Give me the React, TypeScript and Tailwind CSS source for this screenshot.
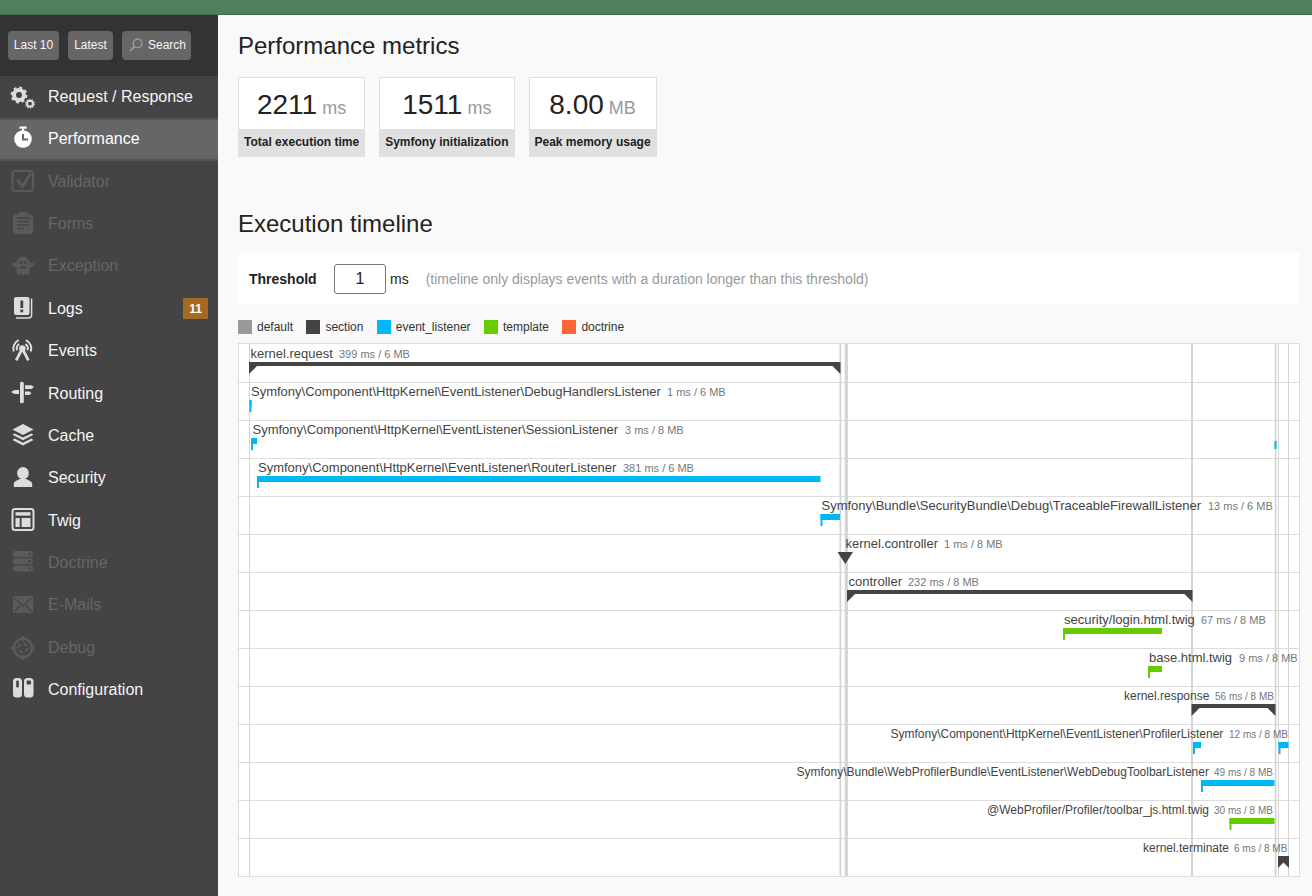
import React from "react";

const BG = "#444";

const icons: Record<string, (c: string) => React.ReactNode> = {
  request: (c) => (
    <>
      <circle cx="8" cy="10" r="5" fill="none" stroke={c} strokeWidth="4" />
      <circle cx="8" cy="10" r="7.4" fill="none" stroke={c} strokeWidth="2" strokeDasharray="3 2.81" />
      <circle cx="19" cy="18.7" r="2.9" fill="none" stroke={c} strokeWidth="2" />
      <circle cx="19" cy="18.7" r="4.3" fill="none" stroke={c} strokeWidth="1.2" strokeDasharray="1.4 1.3" />
    </>
  ),
  performance: (c) => (
    <>
      <rect x="8.4" y="-0.6" width="7.4" height="2.3" rx="1" fill={c} />
      <rect x="11" y="1.5" width="2" height="3" fill={c} />
      <circle cx="12" cy="12" r="8.8" fill={c} />
      <path d="M12 7v5.5h5" fill="none" stroke="#666" strokeWidth="2" />
    </>
  ),
  validator: (c) => (
    <>
      <rect x="1.5" y="1" width="20.5" height="20" rx="2.5" fill="none" stroke={c} strokeWidth="2.2" />
      <path d="M6.5 9.5l5 7L20 3" fill="none" stroke={c} strokeWidth="2.8" />
    </>
  ),
  forms: (c) => (
    <>
      <rect x="2" y="2.6" width="20" height="19.4" rx="2" fill={c} />
      <rect x="7" y="0" width="10" height="5" rx="1.5" fill={c} />
      <path d="M5.5 6h13v2M6 9.5h12M6 13h12M6 16.5h7" fill="none" stroke={BG} strokeWidth="1.4" />
    </>
  ),
  exception: (c) => (
    <>
      <path d="M5.5 8a6.5 6.5 0 0 1 13 0v10.5l-2.2 1.7-2-1.7-2.3 1.7-2.3-1.7-2 1.7-2.2-1.7z" fill={c} />
      <path d="M5.5 7.2C3.5 8.5 2 8.4.5 7.2L1 10l4.5 3zM18.5 7.2c2 1.3 3.5 1.2 5 0L23 10l-4.5 3z" fill={c} />
      <circle cx="9.6" cy="7.6" r="1.5" fill={BG} />
      <circle cx="14.4" cy="7.6" r="1.5" fill={BG} />
      <path d="M8.5 11.5h7v2h-7z" fill={BG} />
    </>
  ),
  logs: (c) => (
    <>
      <rect x="3" y="0" width="15.5" height="18" rx="2" fill={c} />
      <path d="M20.6 1.5V18a3 3 0 0 1-3 3H5" fill="none" stroke={c} strokeWidth="1.5" />
      <rect x="9.4" y="3.5" width="2.8" height="7.5" fill={BG} />
      <rect x="9.4" y="12.5" width="2.8" height="2.8" fill={BG} />
    </>
  ),
  events: (c) => (
    <>
      <circle cx="11.3" cy="9.5" r="3.2" fill={c} />
      <path d="M10.3 11.5L5.2 21.3M12.3 11.5l5.1 9.8" fill="none" stroke={c} strokeWidth="2.8" />
      <path d="M6.1 11.3A5.5 5.5 0 0 1 8.2 5M16.5 11.3A5.5 5.5 0 0 0 14.4 5M2.8 12.5A9 9 0 0 1 7.8 1.2M19.8 12.5A9 9 0 0 0 14.8 1.2" fill="none" stroke={c} strokeWidth="2" />
    </>
  ),
  routing: (c) => (
    <>
      <rect x="9" y="-0.3" width="3.8" height="21.6" rx="1.6" fill={c} />
      <path d="M8 8H3.5L0 10l3.5 2H8z" fill={c} />
      <path d="M14 3.2h6.5L23 5l-2.5 2H14zM14 9.5h4.5l2 1.7-2 1.8H14z" fill={c} />
    </>
  ),
  cache: (c) => (
    <>
      <path d="M12 0l10.5 5.5L12 11 1.5 5.5z" fill={c} />
      <path d="M3.6 9.4L1.5 10.7 12 16.2l10.5-5.5-2.1-1.3L12 13.6z" fill={c} />
      <path d="M3.6 14.6l-2.1 1.3L12 21.5l10.5-5.6-2.1-1.3-8.4 4.2z" fill={c} />
    </>
  ),
  security: (c) => (
    <>
      <ellipse cx="12" cy="6.2" rx="5.8" ry="6.2" fill={c} />
      <path d="M2.8 20v-3c0-2.5 3.5-3.6 6-5h6.4c2.5 1.4 6 2.5 6 5v3z" fill={c} />
    </>
  ),
  twig: (c) => (
    <>
      <rect x="1.5" y="0" width="21" height="21" rx="2.5" fill="none" stroke={c} strokeWidth="2" />
      <rect x="4.5" y="3.2" width="15" height="3.4" fill={c} />
      <rect x="4.5" y="9" width="4.2" height="9" fill={c} />
      <rect x="10.6" y="9" width="8.9" height="9" fill={c} />
    </>
  ),
  doctrine: (c) => (
    <>
      <rect x="2" y="0" width="20" height="6" rx="2.2" fill={c} />
      <rect x="2" y="7.2" width="20" height="6" rx="2.2" fill={c} />
      <rect x="2" y="14.4" width="20" height="6" rx="2.2" fill={c} />
      <circle cx="18.5" cy="3" r="1.2" fill={BG} />
      <circle cx="18.5" cy="10.2" r="1.2" fill={BG} />
      <circle cx="18.5" cy="17.4" r="1.2" fill={BG} />
    </>
  ),
  email: (c) => (
    <>
      <rect x="2" y="2" width="20" height="17" rx="1.5" fill={c} />
      <path d="M3.5 4l8.5 8 8.5-8M3.5 17.5l5.5-6M20.5 17.5l-5.5-6" fill="none" stroke={BG} strokeWidth="1.3" />
    </>
  ),
  debug: (c) => (
    <>
      <circle cx="12" cy="12" r="9.2" fill="none" stroke={c} strokeWidth="2.6" />
      <path d="M12 0v5.5M12 18.5V24M0 12h5.5M18.5 12H24" stroke={c} strokeWidth="2.6" fill="none" />
      <circle cx="12" cy="12" r="4.4" fill="none" stroke={c} strokeWidth="2.2" strokeDasharray="4.5 2.4" />
    </>
  ),
  config: (c) => (
    <>
      <rect x="2" y="0" width="9" height="19.5" rx="3.5" fill={c} />
      <rect x="13" y="0" width="9.5" height="19.5" rx="3.5" fill={c} />
      <rect x="5.2" y="2.6" width="2.6" height="7" rx="1" fill={BG} />
      <rect x="15.6" y="2.6" width="4.4" height="4" rx="1" fill={BG} />
    </>
  ),
};

type Item = { label: string; icon: string; disabled?: boolean; selected?: boolean; badge?: string };
const menu: Item[] = [
  { label: "Request / Response", icon: "request" },
  { label: "Performance", icon: "performance", selected: true },
  { label: "Validator", icon: "validator", disabled: true },
  { label: "Forms", icon: "forms", disabled: true },
  { label: "Exception", icon: "exception", disabled: true },
  { label: "Logs", icon: "logs", badge: "11" },
  { label: "Events", icon: "events" },
  { label: "Routing", icon: "routing" },
  { label: "Cache", icon: "cache" },
  { label: "Security", icon: "security" },
  { label: "Twig", icon: "twig" },
  { label: "Doctrine", icon: "doctrine", disabled: true },
  { label: "E-Mails", icon: "email", disabled: true },
  { label: "Debug", icon: "debug", disabled: true },
  { label: "Configuration", icon: "config" },
];

function MenuRow({ item }: { item: Item }) {
  const color = item.disabled ? "#5a5a5a" : item.selected ? "#fff" : "#ddd";
  return (
    <li
      className={
        "flex h-[42.4px] items-center pl-[11px] pr-[10px] text-base leading-[22.4px] " +
        (item.selected ? "bg-[#666] border-y-2 border-[#555] text-white" : item.disabled ? "text-[#666]" : "text-[#f5f5f5]")
      }
    >
      <svg width="24" height="24" viewBox="0 0 24 24" className="shrink-0 overflow-visible">
        {icons[item.icon](color)}
      </svg>
      <span className="ml-[13px] flex-1">{item.label}</span>
      {item.badge && (
        <span className="flex h-[21px] w-[25px] items-center justify-center bg-[#a46a1f] text-xs font-bold text-white">
          {item.badge}
        </span>
      )}
    </li>
  );
}

function HeaderButton({ children, className }: { children: React.ReactNode; className: string }) {
  return (
    <span className={"flex h-[29px] items-center rounded-sm bg-[#666] pb-[2px] text-xs text-[#f5f5f5] " + className}>{children}</span>
  );
}

function Metric({ value, unit, label }: { value: string; unit: string; label: string }) {
  return (
    <div className="flex flex-col">
      <div className="flex h-[52px] items-baseline justify-center border border-b-0 border-[#e0e0e0] bg-white pt-[10px]">
        <span className="text-[28px] leading-[34px] text-[#222]">{value}</span>
        <span className="ml-[5px] text-lg leading-[34px] text-[#999]">{unit}</span>
      </div>
      <div className="flex h-[28px] items-center justify-center bg-[#e0e0e0] px-[6px] pb-[2px] text-xs font-bold text-[#222]">{label}</div>
    </div>
  );
}

const legend = [
  ["default", "bg-[#999]"],
  ["section", "bg-[#444]"],
  ["event_listener", "bg-[#00b8f5]"],
  ["template", "bg-[#66cc00]"],
  ["doctrine", "bg-[#ff6633]"],
];

type Bar = { kind: "section" | "event" | "template" | "marker"; x1: number; x2: number; h?: number };
type Row = { label: string; x: number; msX: number; ms: string; small?: boolean; bars: Bar[] };
const rows: Row[] = [
  { label: "kernel.request", x: 250.5, msX: 339, ms: "399 ms / 6 MB", bars: [{ kind: "section", x1: 249, x2: 840.5 }] },
  { label: "Symfony\\Component\\HttpKernel\\EventListener\\DebugHandlersListener", x: 251, msX: 667, ms: "1 ms / 6 MB", bars: [{ kind: "event", x1: 249.5, x2: 251.5 }] },
  { label: "Symfony\\Component\\HttpKernel\\EventListener\\SessionListener", x: 252.5, msX: 625, ms: "3 ms / 8 MB", bars: [{ kind: "event", x1: 251, x2: 257 }, { kind: "event", x1: 1274.5, x2: 1276.5, h: 8 }] },
  { label: "Symfony\\Component\\HttpKernel\\EventListener\\RouterListener", x: 258, msX: 623, ms: "381 ms / 6 MB", bars: [{ kind: "event", x1: 257, x2: 820.5 }] },
  { label: "Symfony\\Bundle\\SecurityBundle\\Debug\\TraceableFirewallListener", x: 821.5, msX: 1208, ms: "13 ms / 6 MB", bars: [{ kind: "event", x1: 820.5, x2: 840 }] },
  { label: "kernel.controller", x: 845.5, msX: 944, ms: "1 ms / 8 MB", bars: [{ kind: "marker", x1: 837.5, x2: 853 }] },
  { label: "controller", x: 848.5, msX: 908, ms: "232 ms / 8 MB", bars: [{ kind: "section", x1: 847, x2: 1192.5 }] },
  { label: "security/login.html.twig", x: 1064, msX: 1201, ms: "67 ms / 8 MB", bars: [{ kind: "template", x1: 1063, x2: 1162 }] },
  { label: "base.html.twig", x: 1149, msX: 1239, ms: "9 ms / 8 MB", bars: [{ kind: "template", x1: 1148, x2: 1162 }] },
  { label: "kernel.response", x: 1124, msX: 1215, ms: "56 ms / 8 MB", small: true, bars: [{ kind: "section", x1: 1191.5, x2: 1275.5 }] },
  { label: "Symfony\\Component\\HttpKernel\\EventListener\\ProfilerListener", x: 890.5, msX: 1229, ms: "12 ms / 8 MB", small: true, bars: [{ kind: "event", x1: 1193, x2: 1201 }, { kind: "event", x1: 1278.5, x2: 1288.5 }] },
  { label: "Symfony\\Bundle\\WebProfilerBundle\\EventListener\\WebDebugToolbarListener", x: 796.5, msX: 1214, ms: "49 ms / 8 MB", small: true, bars: [{ kind: "event", x1: 1201, x2: 1274.5 }] },
  { label: "@WebProfiler/Profiler/toolbar_js.html.twig", x: 987, msX: 1214, ms: "30 ms / 8 MB", small: true, bars: [{ kind: "template", x1: 1229.5, x2: 1274.5 }] },
  { label: "kernel.terminate", x: 1143, msX: 1234, ms: "6 ms / 8 MB", small: true, bars: [{ kind: "section", x1: 1278, x2: 1289 }] },
];

function renderBar(b: Bar, y: number, key: number) {
  if (b.kind === "section") {
    return (
      <g key={key} fill="#444">
        <rect x={b.x1} y={y + 18} width={b.x2 - b.x1} height={4} />
        <polygon points={`${b.x1},${y + 22} ${b.x1 + 8},${y + 22} ${b.x1},${y + 30}`} />
        <polygon points={`${b.x2},${y + 22} ${b.x2 - 8},${y + 22} ${b.x2},${y + 30}`} />
      </g>
    );
  }
  if (b.kind === "marker") {
    return <polygon key={key} fill="#444" points={`${b.x1},${y + 18} ${b.x2},${y + 18} ${(b.x1 + b.x2) / 2},${y + 30}`} />;
  }
  const color = b.kind === "event" ? "#00b8f5" : "#66cc00";
  if (b.h) {
    return <rect key={key} x={b.x1} y={y + 21} width={b.x2 - b.x1} height={b.h} fill={color} />;
  }
  return (
    <g key={key} fill={color}>
      <rect x={b.x1} y={y + 18} width={b.x2 - b.x1} height={6} />
      <rect x={b.x1} y={y + 18} width={Math.min(2, b.x2 - b.x1)} height={12} />
    </g>
  );
}

function Timeline() {
  const vlines: [number, number][] = [
    [249, 1],
    [839.5, 1.7],
    [844.7, 3.2],
    [1191, 2],
    [1274.7, 1.8],
    [1278, 1],
    [1288, 1],
  ];
  return (
    <div className="mt-[9px] h-[534px] w-[1062px] border border-[#ddd] bg-white">
      <svg width="1060" height="532" viewBox="239 344 1060 532" className="block">
        {rows.map((_, i) => (
          <rect key={i} x={239} y={382 + 38 * i} width={1060} height={1} fill="#ddd" />
        ))}
        {vlines.map(([x, w]) => (
          <rect key={x} x={x} y={344} width={w} height={532} fill="#d4d4d4" />
        ))}
        {rows.map((r, i) => {
          const y = 344 + 38 * i;
          return (
            <g key={r.label}>
              <text x={r.x} y={y + 14} fontSize={r.small ? 12 : 13} fill="#444">{r.label}</text>
              <text x={r.msX} y={y + 14} fontSize={r.small ? 10 : 11} fill="#777">{r.ms}</text>
              {r.bars.map((b, j) => renderBar(b, y, j))}
            </g>
          );
        })}
      </svg>
    </div>
  );
}

export default function App() {
  return (
    <div className="flex min-h-screen flex-col bg-[#f9f9f9] font-['Liberation_Sans',Arial,sans-serif]">
      <div className="h-[15px] border-b border-[#3f6e4f] bg-[#4f805d]" />
      <div className="flex flex-1">
        <aside className="w-[218px] shrink-0 bg-[#444]">
          <div className="flex h-[60.8px] items-start gap-[9px] bg-[#333] pl-[8px] pt-[16px]">
            <HeaderButton className="w-[51px] justify-center">Last 10</HeaderButton>
            <HeaderButton className="w-[45px] justify-center">Latest</HeaderButton>
            <HeaderButton className="w-[69px] pl-[7px]">
              <svg width="14" height="14" viewBox="0 0 14 14" className="mr-[5px]">
                <circle cx="8.6" cy="5.4" r="4.3" fill="none" stroke="#a0a0a0" strokeWidth="1.3" />
                <path d="M5.4 8.6L1 13" stroke="#a0a0a0" strokeWidth="1.7" />
              </svg>
              Search
            </HeaderButton>
          </div>
          <ul>
            {menu.map((m) => (
              <MenuRow key={m.label} item={m} />
            ))}
          </ul>
        </aside>
        <main className="flex-1 pl-[20px] text-[#222]">
          <h2 className="mt-[16px] text-2xl leading-[30px]">Performance metrics</h2>
          <div className="mt-[16px] flex gap-[14px]">
            <Metric value="2211" unit="ms" label="Total execution time" />
            <Metric value="1511" unit="ms" label="Symfony initialization" />
            <Metric value="8.00" unit="MB" label="Peak memory usage" />
          </div>
          <h2 className="mt-[52px] text-2xl leading-[30px]">Execution timeline</h2>
          <div className="mt-[14px] flex h-[51px] w-[1061px] items-center bg-white pl-[11px] text-sm">
            <span className="w-[85px] font-bold">Threshold</span>
            <span className="flex h-[30px] w-[52px] items-center justify-center rounded-[3px] border border-[#777] text-base">1</span>
            <span className="ml-[4px]">ms</span>
            <span className="ml-[17px] text-[#999]">(timeline only displays events with a duration longer than this threshold)</span>
          </div>
          <div className="mt-[16px] flex h-[14px] items-center gap-[13.4px] text-xs text-[#333]">
            {legend.map(([name, cls]) => (
              <span key={name} className="flex items-center gap-[5px]">
                <span className={"h-[14px] w-[14px] " + cls} />
                {name}
              </span>
            ))}
          </div>
          <Timeline />
        </main>
      </div>
    </div>
  );
}
